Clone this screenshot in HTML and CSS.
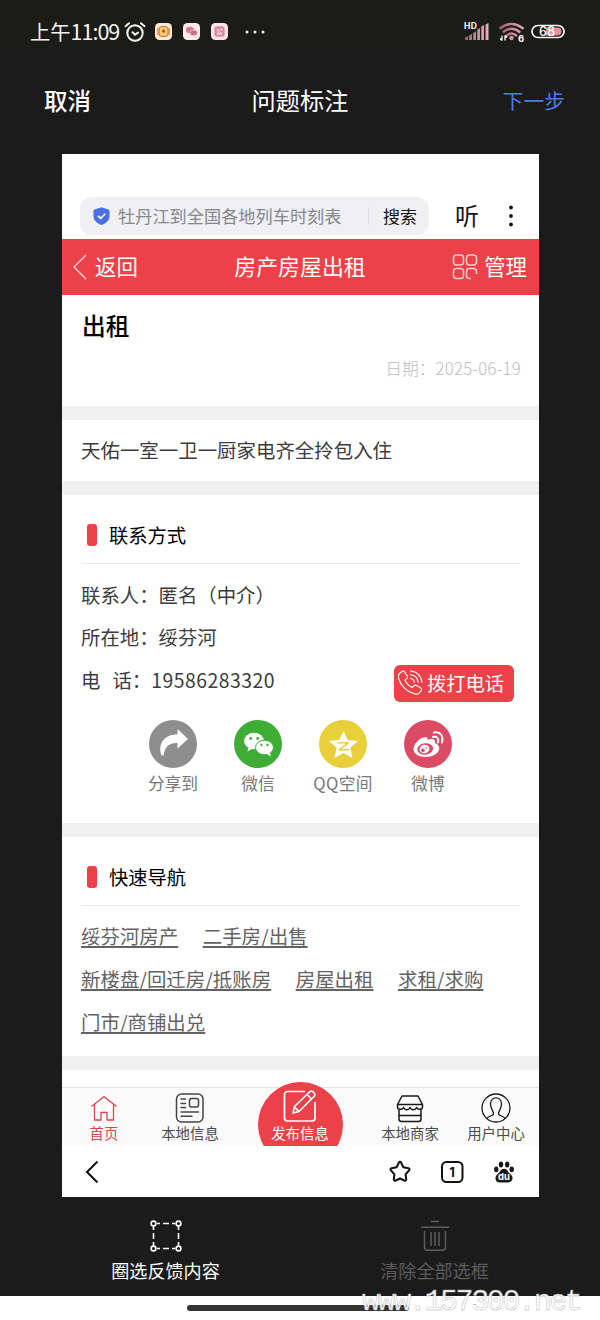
FILE: index.html
```html
<!DOCTYPE html>
<html lang="zh-CN">
<head>
<meta charset="utf-8">
<title>问题标注</title>
<link rel="stylesheet" href="styles.css">
</head>
<body>
<header class="status">
  <span class="clock">上午<span class="time">11:09</span></span>
  <svg class="alarm" width="22" height="22" viewBox="0 0 22 22" fill="none" stroke="#f4f4f0" stroke-width="2" stroke-linecap="round"><circle cx="11" cy="12" r="7.700"/><path d="M1.500 5.200 5 2.200M20.500 5.200 17 2.200M8.500 11.200 11 13.600 14 11.600"/></svg>
  <svg class="app" width="17" height="17" viewBox="0 0 17 17"><rect width="17" height="17" rx="4.500" fill="#fde9dc"/><rect x="4" y="3.500" width="9" height="10" rx="3" fill="#f8cf74" stroke="#c8742b"/><path d="M3 5v7M14 5v7" stroke="#d9763f" stroke-width="1.300"/><path d="m8.500 6 2 2-2 2.200-2-2.200z" fill="#b45a24"/></svg>
  <svg class="app" width="17" height="17" viewBox="0 0 17 17"><rect width="17" height="17" rx="4.500" fill="#fde9e9"/><ellipse cx="7" cy="7" rx="4" ry="3.200" fill="#d27c98"/><ellipse cx="10.700" cy="9.800" rx="3.800" ry="2.900" fill="#c8708d" stroke="#fde9e9" stroke-width=".5"/></svg>
  <svg class="app" width="17" height="17" viewBox="0 0 17 17"><rect width="17" height="17" rx="4.500" fill="#fde4e8"/><rect x="4" y="4" width="9" height="9" rx="1" fill="#dc93ab" stroke="#cd7896"/><path d="M6 7h2M9.500 6.500h2M6 11l2.500-2.500L11 11z" stroke="#fde4e8" fill="none"/></svg>
  <svg class="more" width="20" height="4" viewBox="0 0 20 4" fill="#eee"><circle cx="2" cy="2" r="1.500"/><circle cx="10" cy="2" r="1.500"/><circle cx="18" cy="2" r="1.500"/></svg>
  <svg class="system" width="102" height="26" viewBox="0 -2 102 26">
    <defs><linearGradient id="pink"><stop stop-color="#a35a68"/><stop offset="1" stop-color="#eab0ba"/></linearGradient></defs>
    <path fill="url(#pink)" d="M1 16.500 4 15v4H1zM5 14.500 8 13v6H5zM9.200 12l2.800-1.500V19H9.200zM13.200 8.500 16 7v12h-2.800zM17.200 5.500 20 4v15h-2.800zM21.500 3.500 24.500 2v17h-3z"/>
    <text class="glyph" x="0" y="8" font-size="8.500" fill="#fff" textLength="13">HD</text>
    <g fill="none" stroke="url(#pink)" stroke-width="2.400"><path d="M35.500 7.800Q47.500-2 59.500 7.800M38.800 11.500Q47.500 4 56.200 11.500M42 15Q47.500 10 53 15"/></g>
    <circle cx="47.500" cy="17" r="2.300" fill="#d98c9a"/>
    <path d="M38 14.500v5M38 19.500l-2-2M41 19.500v-5M41 14.500l2 2" stroke="#fff" stroke-width="1.300" fill="none"/>
    <text class="glyph" x="54" y="20.500" font-size="9.500" fill="#fff">6</text>
    <rect x="68" y="4.500" width="32" height="12" rx="6" fill="#1b1b17" stroke="#fff" stroke-width="1.700"/>
    <path d="M82 6.500h11.500a4 4 0 0 1 0 8H82z" fill="#e58fa0"/>
    <text class="digits" x="75" y="15" font-size="12.500" fill="#fff" textLength="16">68</text>
  </svg>
</header>
<nav class="actions">
  <span class="cancel">取消</span><span class="heading">问题标注</span><span class="next">下一步</span>
</nav>

<main class="shot">
  <div class="browser-top">
    <div class="search">
      <svg width="17" height="18" viewBox="0 0 17 18"><path d="M8.500.8 16 3.200v6.300c0 4-3.200 6.500-7.500 8C4.200 16 1 13.500 1 9.500V3.200z" fill="#4b6fe8" stroke="#4b6fe8" stroke-linejoin="round"/><path d="m5 8.800 2.700 2.500 4.600-4.600" stroke="#fff" stroke-width="1.600" fill="none"/></svg>
      <span class="query">牡丹江到全国各地列车时刻表</span>
      <span class="go">搜索</span>
    </div>
    <span class="listen">听</span>
    <svg class="kebab" width="6" height="22" viewBox="0 0 6 22" fill="#151515"><circle cx="3" cy="2.500" r="1.900"/><circle cx="3" cy="11" r="1.900"/><circle cx="3" cy="19.500" r="1.900"/></svg>
  </div>
  <div class="redbar">
    <span class="back"><svg width="14" height="26" viewBox="0 0 14 26" fill="none" stroke="#fbd5d7" stroke-width="1.400"><path d="M13 1 1 13l12 12"/></svg>返回</span>
    <span class="bar-title">房产房屋出租</span>
    <span class="manage"><svg width="26" height="26" viewBox="0 0 26 26" fill="none" stroke="#fbd0d3" stroke-width="1.500"><rect x="1.500" y="1" width="10" height="10" rx="3"/><rect x="14.500" y="1" width="10" height="10" rx="3"/><rect x="1.500" y="14.500" width="10" height="10" rx="3"/><path d="M19 24.500h-1.500a3 3 0 0 1-3-3v-4a3 3 0 0 1 3-3h4a3 3 0 0 1 3 3V20"/></svg>管理</span>
  </div>
  <section class="intro">
    <h1>出租</h1>
    <div class="date"><span>日期：</span><span class="day">2025-06-19</span></div>
  </section>
  <section class="summary">天佑一室一卫一厨家电齐全拎包入住</section>
  <section class="contact">
    <h2>联系方式</h2>
    <p>联系人：匿名（中介）</p>
    <p>所在地：绥芬河</p>
    <div class="phone-row">
      <p><span class="dian">电</span>话：<span class="number">19586283320</span></p>
      <a class="call"><svg width="27" height="27" viewBox="0 0 27 27" fill="none" stroke="#fff" stroke-width="1.100" stroke-linecap="round" stroke-linejoin="round"><path d="M2.500 4.500 5 2.500c1-.7 2-.4 2.600.5l2.600 4c.6 1 .4 2-.4 2.700L8 11.200c1.500 3.300 4 5.800 7.300 7.300l1.600-1.700c.8-.8 1.800-.9 2.800-.3l4 2.500c1 .6 1.200 1.700.5 2.600l-2 2.500c-1 1-2.800 1.200-4.500.8C10 23 3.500 16.500 1.500 9c-.4-1.700-.2-3.400 1-4.500z"/><path d="M13.500 9.500c2.200.2 3.500 1.500 3.800 3.800M13.500 5.700c4.300.3 7.200 3.200 7.600 7.500M13.500 2c6.300.4 11 5 11.300 11.200"/></svg>拨打电话</a>
    </div>
    <div class="share">
      <div><svg viewBox="0 0 48 48"><circle cx="24" cy="24" r="24" fill="#8e8e8e"/><path d="M28.500 9 39 19 28.500 28.500V23c-8-.5-12.500 3.500-14 12.500h-2C8 22.500 17 14 28.500 14.500z" fill="#fff"/></svg>分享到</div>
      <div><svg viewBox="0 0 48 48"><circle cx="24" cy="24" r="24" fill="#3dad36"/><ellipse cx="20" cy="21" rx="10" ry="8.300" fill="#fff"/><path d="m14.500 27-1 4.500 5-3z" fill="#fff"/><ellipse cx="30.500" cy="27.500" rx="9" ry="7.300" fill="#fff" stroke="#3dad36"/><path d="m32 33.500 5 3-1.500-5z" fill="#fff"/><g fill="#3dad36"><circle cx="16.700" cy="18.500" r="1.400"/><circle cx="23.700" cy="18.500" r="1.400"/><circle cx="27.500" cy="25" r="1.200"/><circle cx="33.500" cy="25" r="1.200"/></g></svg>微信</div>
      <div><svg viewBox="0 0 48 48"><circle cx="24" cy="24" r="24" fill="#e9cf3a"/><path d="m24.500 11 4.100 9 10.200 1-7.500 6.800 2.200 10.200-9-5-9 5 2-10.200-7.500-6.800 10.200-1z" fill="#fff"/><path d="M18.500 22.800h11l-9.500 7h10.500" stroke="#e9cf3a" stroke-width="1.500" stroke-linejoin="bevel" fill="none"/></svg><span class="qq">QQ空间</span></div>
      <div><svg viewBox="0 0 48 48"><circle cx="24" cy="24" r="24" fill="#dc4b64"/><path d="M20 17.500c2.500-1.500 4 0 3.500 2.500 4-1.800 8.500-1.200 7.500 3 8 3.500 4.300 13.200-8.500 14C13.500 37.300 8 32.500 9.800 27c1.500-4.500 6.500-9.500 10.200-9.500z" fill="#fff"/><ellipse cx="21.200" cy="29" rx="8" ry="5.700" fill="#dc4b64" transform="rotate(-8 21.200 29)"/><ellipse cx="20.500" cy="29" rx="5" ry="4.300" fill="#fff" transform="rotate(-15 20.500 29)"/><circle cx="19" cy="30.200" r="1.800" fill="#dc4b64"/><circle cx="22.500" cy="28" r=".8" fill="#dc4b64"/><path d="M29 17c4-.8 6 1.500 5 5.500M30 12.500c6.500-1 9.500 3 8 10" stroke="#fff" stroke-width="2" fill="none" stroke-linecap="round"/></svg>微博</div>
    </div>
  </section>
  <section class="quick">
    <h2>快速导航</h2>
    <div class="links"><a>绥芬河房产</a><a>二手房/出售</a><a>新楼盘/回迁房/抵账房</a><a>房屋出租</a><a>求租/求购</a><a>门市/商铺出兑</a></div>
  </section>
  <div class="next-card"></div>
  <nav class="tabs">
    <div class="tab home"><svg width="30" height="30" viewBox="0 0 30 30" fill="none" stroke="#d6474e" stroke-width="1.300" stroke-linejoin="round"><path d="M2.500 13.500 15 3.500l12.500 10M5.500 11.500V27H12v-7.500h6V27h6.500V11.500"/></svg>首页</div>
    <div class="tab local"><svg width="30" height="30" viewBox="0 0 30 30" fill="none" stroke="#444" stroke-width="1.500" stroke-linecap="round"><rect x="1.500" y="1" width="26.500" height="28" rx="5"/><rect x="14.500" y="5.500" width="9" height="8.500" rx="2"/><path d="M6 6h4.500M6 10.500h4.500M6 14.500h4.500M6 19h17.500M6 23.200h11"/></svg>本地信息</div>
    <div class="publish-wrap"><div class="publish"><svg width="36" height="34" viewBox="0 0 36 34" fill="none" stroke="#fff" stroke-width="1.700" stroke-linejoin="round"><path d="M23 2.500H5.500a3 3 0 0 0-3 3V29a3 3 0 0 0 3 3H30a3 3 0 0 0 3-3V13"/><path d="m11 24 1.500-6.500L28 2.500c2-1.500 6 2 4.500 4.500L17 22.500zM25 5.500l4.500 4.500M12.500 18l4 4"/></svg><span>发布信息</span></div></div>
    <div class="tab shop"><svg width="30" height="30" viewBox="0 0 30 30" fill="none" stroke="#171717" stroke-width="1.500" stroke-linejoin="round"><path d="M7 3h16l4.500 8.500H2.500zM2.500 11.500V14c0 3 5 3 6 .5 1.500 3 5 3 6.500 0 1.500 3 5 3 6.500 0 1 2.500 6 2.500 6-.5v-2.500M4 16.500V26q0 2.500 2.500 2.500h17q2.500 0 2.500-2.500v-9.500M4 22.500h22"/></svg>本地商家</div>
    <div class="tab user"><svg width="30" height="30" viewBox="0 0 30 30" fill="none" stroke="#171717" stroke-width="1.300"><circle cx="15" cy="15" r="14"/><path d="M6 25.500c1-2.500 6-2.500 6.500-4.500.5-3-3-4.500-3-10 0-4 2.500-6.200 5.500-6.200s5.500 2.200 5.500 6.200c0 5.500-3.500 7-3 10 .5 2 5.500 2 6.500 4.500"/></svg>用户中心</div>
  </nav>
  <div class="browser-bottom">
    <svg width="14" height="24" viewBox="0 0 14 24" fill="none" stroke="#111" stroke-width="2.100"><path d="M12.500 1.500 2 12l10.500 10.500"/></svg>
    <div class="tools">
      <svg width="24" height="24" viewBox="0 0 24 24" fill="none" stroke="#111" stroke-width="2" stroke-linejoin="round"><path d="M10.800 2.700q1.200-1.700 2.400 0l2.200 4.500 5 1q1.900.6.700 2.200l-3.500 3.800.6 5q0 2-1.900 1.300L12 18.500l-4.300 2q-1.900.7-1.900-1.300l.6-5-3.500-3.800q-1.200-1.600.7-2.200l5-1z"/></svg>
      <svg width="24" height="24" viewBox="0 0 24 24"><rect x="2" y="2" width="20.500" height="20" rx="4.500" fill="none" stroke="#111" stroke-width="2"/><text class="glyph" x="12" y="16.600" font-size="13" text-anchor="middle" fill="#111">1</text></svg>
      <svg width="24" height="24" viewBox="0 0 24 24" fill="#171717"><ellipse cx="4.300" cy="9.300" rx="2.200" ry="2.900"/><ellipse cx="9" cy="4.500" rx="2.200" ry="3"/><ellipse cx="15.200" cy="4.500" rx="2.200" ry="3"/><ellipse cx="19.700" cy="9.300" rx="2.200" ry="2.900"/><path d="M12 8.800c3.500 0 3.500 3 6 5 4.500 3.500 2.500 8.700-2 8.700H8c-4.500 0-6.500-5-2-8.700 2.500-2 2.500-5 6-5z"/><text class="glyph" x="12" y="20.300" font-size="9.500" text-anchor="middle" fill="#fff">du</text></svg>
    </div>
  </div>
</main>

<footer class="bottom">
  <div class="mark"><svg width="34" height="34" viewBox="0 0 34 34" fill="none" stroke="#fff" stroke-width="1.600"><path d="M8 4.500h3M14 4.500h6M23 4.500h3M8 29.500h3M14 29.500h6M23 29.500h3M4.500 7v4M4.500 14v6M4.500 23v4M29.500 7v4M29.500 14v6M29.500 23v4"/><g fill="#1b1b1b"><circle cx="4.500" cy="4.500" r="2.400"/><circle cx="29.500" cy="4.500" r="2.400"/><circle cx="4.500" cy="29.500" r="2.400"/><circle cx="29.500" cy="29.500" r="2.400"/></g></svg>圈选反馈内容</div>
  <div class="clear"><svg width="34" height="34" viewBox="0 0 34 34" fill="none" stroke="#5c5c5c" stroke-width="1.500"><path d="M13 2.500h8M3 8.200h28M6.500 12v16q0 3.200 3.200 3.200h14.600q3.200 0 3.200-3.200V12M13 13v14M17 13v14M21 13v14"/></svg>清除全部选框</div>
</footer>
<div class="gesture"><i></i><span class="watermark">www.157300.net</span></div>
</body>
</html>
```
FILE: styles.css
```css
* { box-sizing: border-box; }
body { margin: 0; width: 600px; height: 1320px; overflow: hidden; background: #1b1b1b; color: #3c3c3c; font-family: "Noto Sans CJK SC", sans-serif; }
svg { flex: none; display: block; }
span, a { white-space: nowrap; }
.glyph { font-family: Inter, sans-serif; font-weight: 700; }
.digits { font-family: Inter, sans-serif; font-weight: 500; }
.status { height: 48px; background: #1b1b17; display: flex; align-items: center; padding: 15px 34px 0 30px; color: #f4f4f0; }
.clock { width: 90px; font-size: 20.3px; line-height: 30px; margin-top: -2px; }
.time { font-size: 21.5px; letter-spacing: -1px; }
.alarm { margin: 0 3px 0 4px; }
.app { width: 17px; margin: 0 5.5px; }
.more { margin-left: 11.5px; }
.system { margin-left: auto; }
.actions { height: 106px; display: grid; grid-template-columns: 150px 1fr 150px; align-items: center; padding: 0 35px 2px 44px; color: #fff; font-weight: 500; line-height: 34px; }
.cancel { font-size: 23.5px; }
.heading { font-size: 24.2px; text-align: center; font-weight: 400; padding-right: 9px; }
.next { font-size: 20.8px; text-align: right; color: #4b7cf0; font-weight: 400; }
.shot { width: 477px; height: 1043px; margin-left: 62px; background: #fff; display: flex; flex-direction: column; overflow: hidden; }
.browser-top { height: 85px; padding: 39px 24px 0 18px; display: flex; align-items: center; flex: none; color: #151515; }
.search { width: 349px; height: 38px; background: #f0f0f3; border-radius: 12px; display: flex; align-items: center; padding: 0 12px 0 13px; }
.query { margin-left: 8px; color: #85868e; font-size: 17.2px; line-height: 24px; margin-top: -1px; }
.go { margin-left: auto; font-size: 17px; padding-left: 14px; border-left: 1px solid #dedee2; line-height: 18px; }
.listen { font-size: 24px; margin: -2px 0 0 26px; line-height: 34px; }
.kebab { margin: 0 1px 0 auto; }
.redbar { height: 55.5px; flex: none; background: #ec4149; color: #fff; display: grid; grid-template-columns: 120px 1fr 120px; align-items: center; padding: 0 12px 1px 11px; font-size: 21.4px; line-height: 32px; }
.back, .manage { display: flex; align-items: center; gap: 8px; }
.back svg, .manage svg { margin-top: 2px; }
.manage { justify-content: flex-end; gap: 6px; }
.bar-title { text-align: center; font-size: 21.9px; }
.intro { height: 111px; padding: 12.5px 18px 0 20px; flex: none; }
h1 { margin: 0; font-size: 23.7px; line-height: 36px; font-weight: 500; color: #000; }
.date { display: flex; justify-content: flex-end; color: #bdbdbd; font-size: 16.8px; font-weight: 300; line-height: 24px; margin-top: 13px; }
.day { letter-spacing: .25px; }
.summary, .contact, .quick, .next-card { border-top: 14px solid #f0f0f0; flex: none; }
.summary { height: 75.5px; padding: 16px 19px 0; font-size: 19.44px; line-height: 28px; }
.contact { height: 342px; padding: 14px 19px 0; font-size: 19.4px; }
h2 { margin: 0 0 11px; height: 55px; border-bottom: 1px solid #e8e8e8; display: flex; align-items: center; gap: 12px; padding: 0 0 2px 6px; font-size: 19.3px; font-weight: 400; color: #000; line-height: 28px; }
h2::before { content: ""; width: 10px; height: 22px; border-radius: 3px; background: #ec4149; }
p { margin: 0; height: 42.4px; line-height: 40px; white-space: nowrap; }
.phone-row { display: flex; justify-content: space-between; height: 44px; padding-right: 6px; }
.dian { margin-right: 12px; }
.number { letter-spacing: .5px; }
.call { width: 120px; height: 37px; margin-top: 5px; border-radius: 6px; background: #ec4149; color: #fff; display: flex; align-items: center; gap: 3px; padding: 0 0 1px 3px; line-height: 28px; font-size: 19.3px; }
.share { margin: 16px 0 0 49.5px; display: flex; }
.share div { width: 85px; display: flex; flex-direction: column; align-items: center; font-size: 16.7px; color: #777; line-height: 24px; gap: 3px; }
.share svg { width: 48px; height: 48px; }
.qq { letter-spacing: .4px; }
.quick { height: 233px; padding: 14px 19px 0; }
.links { display: flex; flex-wrap: wrap; column-gap: 24.5px; color: #636363; font-size: 19.45px; line-height: 42.8px; margin-top: -2px; }
.links a { text-decoration: underline; text-decoration-thickness: 1.5px; text-underline-offset: 2px; }
.next-card { height: 31px; }
.tabs { height: 59px; flex: none; display: flex; position: relative; background: #fafafa; border-top: 1px solid #e2e2e2; color: #4a4a4a; font-size: 14.4px; line-height: 20px; }
.tab { width: 86px; display: flex; flex-direction: column; align-items: center; padding-top: 5px; }
.tab.home { color: #d6474e; width: 84px; margin-right: 1px; }
.publish-wrap { width: 134px; height: 64px; margin-top: -6px; overflow: hidden; display: flex; justify-content: center; }
.publish { width: 85px; height: 85px; flex: none; border-radius: 50%; background: #ec4149; color: #fff; display: flex; flex-direction: column; align-items: center; padding-top: 7px; }
.browser-bottom { height: 51px; flex: none; display: flex; justify-content: space-between; align-items: center; padding: 0 23px; }
.tools { display: flex; gap: 28px; }
.bottom { height: 99px; display: flex; color: #fff; font-size: 18.1px; line-height: 26px; padding: 22px 31px 0; }
.bottom div { width: 269px; display: flex; flex-direction: column; align-items: center; gap: 4px; }
.bottom .clear { color: #5c5c5c; }
.gesture { height: 24px; background: #fff; position: relative; padding: 9px 0 0 187px; }
.gesture i { display: block; width: 222px; height: 6px; border-radius: 3px; background: #333; }
.watermark { position: absolute; left: 362px; top: -14px; font: 30px/40px "Liberation Mono", monospace; letter-spacing: -2.4px; color: #fffffff0; -webkit-text-stroke: .4px #a9a9a9; }
```
